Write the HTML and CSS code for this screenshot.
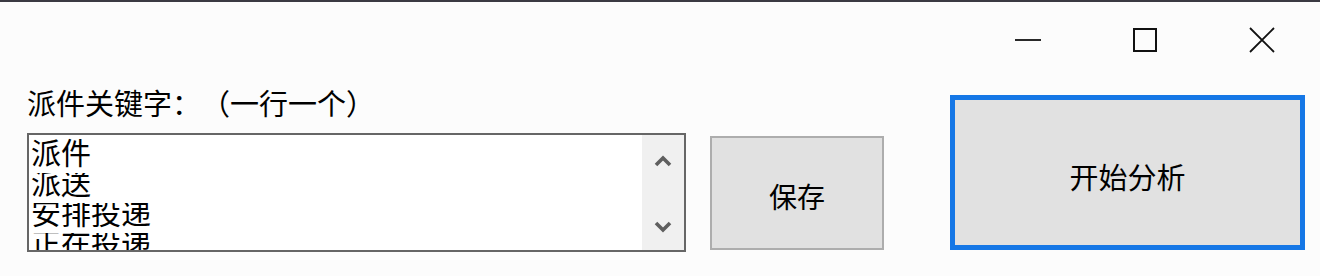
FILE: index.html
```html
<!DOCTYPE html>
<html lang="zh-CN">
<head>
    <meta charset="UTF-8">
    <meta name="viewport" content="width=device-width, initial-scale=1.0">
    <title>派件关键字</title>
    <link rel="stylesheet" href="styles.css">
</head>
<body>
    <div class="window">
        <div class="titlebar">
            <div class="controls">
                <button class="ctrl">
                    <svg width="26" height="4" viewBox="0 0 26 4"><line x1="0" y1="2" x2="26" y2="2" stroke="#111" stroke-width="1.8"/></svg>
                </button>
                <button class="ctrl">
                    <svg width="24" height="24" viewBox="0 0 24 24"><rect x="1" y="1" width="22" height="22" fill="none" stroke="#111" stroke-width="2"/></svg>
                </button>
                <button class="ctrl">
                    <svg width="26" height="26" viewBox="0 0 26 26"><path d="M1 1 L25 25 M25 1 L1 25" stroke="#111" stroke-width="1.8" fill="none"/></svg>
                </button>
            </div>
        </div>

        <main class="content">
            <div class="left">
                <p class="label">派件关键字：（一行一个）</p>
                <div class="keywords">
                    <div class="lines">
                        <div class="line">派件</div>
                        <div class="line">派送</div>
                        <div class="line">安排投递</div>
                        <div class="line">正在投递</div>
                    </div>
                    <div class="scrollbar">
                        <svg width="18" height="12" viewBox="0 0 18 12"><polyline points="2,10 9,3 16,10" fill="none" stroke="#5f5f5f" stroke-width="3.6"/></svg>
                        <svg width="18" height="12" viewBox="0 0 18 12"><polyline points="2,2 9,9 16,2" fill="none" stroke="#5f5f5f" stroke-width="3.6"/></svg>
                    </div>
                </div>
            </div>
            <button class="save">保存</button>
            <button class="start">开始分析</button>
        </main>
    </div>
</body>
</html>
```

FILE: styles.css
```css
body{
    margin: 0;
    background: #fcfcfc;
    font-family: "Noto Sans CJK SC", "Noto Sans", sans-serif;
    color: #000;
    text-spacing-trim: space-all;
}
.window{
    height: 276px;
    border-top: 2px solid #3b3a42;
    box-sizing: border-box;
    overflow: hidden;
}
.titlebar{
    height: 76px;
    display: flex;
    justify-content: flex-end;
}
.controls{
    display: flex;
}
.ctrl{
    width: 117px;
    height: 76px;
    border: none;
    background: transparent;
    display: flex;
    align-items: center;
    justify-content: center;
    padding: 0;
}
.content{
    display: flex;
    align-items: flex-start;
}
.left{
    padding-left: 27px;
    padding-top: 10px;
}
.label{
    margin: 0 0 16px 0;
    font-size: 29px;
    line-height: 29px;
    height: 29px;
    white-space: nowrap;
}
.keywords{
    width: 659px;
    height: 119px;
    box-sizing: border-box;
    border: 2px solid #666;
    background: #fff;
    display: flex;
    overflow: hidden;
}
.lines{
    flex: 1;
    padding: 3px 0 0 2px;
}
.line{
    height: 25px;
    margin-top: 5px;
    overflow: hidden;
    font-size: 30px;
    line-height: 16px;
    white-space: nowrap;
}
.line:first-child{
    overflow: visible;
}
.scrollbar{
    width: 42px;
    background: #f0f0f0;
    display: flex;
    flex-direction: column;
    align-items: center;
    justify-content: space-between;
    padding: 20px 0 17px 0;
}
.save{
    margin-top: 58px;
    margin-left: 24px;
    width: 174px;
    height: 114px;
    border: 2px solid #adadad;
    background: #e1e1e1;
    font-family: inherit;
    font-size: 28px;
    padding: 6px 0 0 0;
    color: #000;
}
.start{
    margin-top: 17px;
    margin-left: 66px;
    width: 355px;
    height: 155px;
    border: 5px solid #1577e6;
    background: #e1e1e1;
    font-family: inherit;
    font-size: 29px;
    padding: 6px 0 0 0;
    color: #000;
}
```
